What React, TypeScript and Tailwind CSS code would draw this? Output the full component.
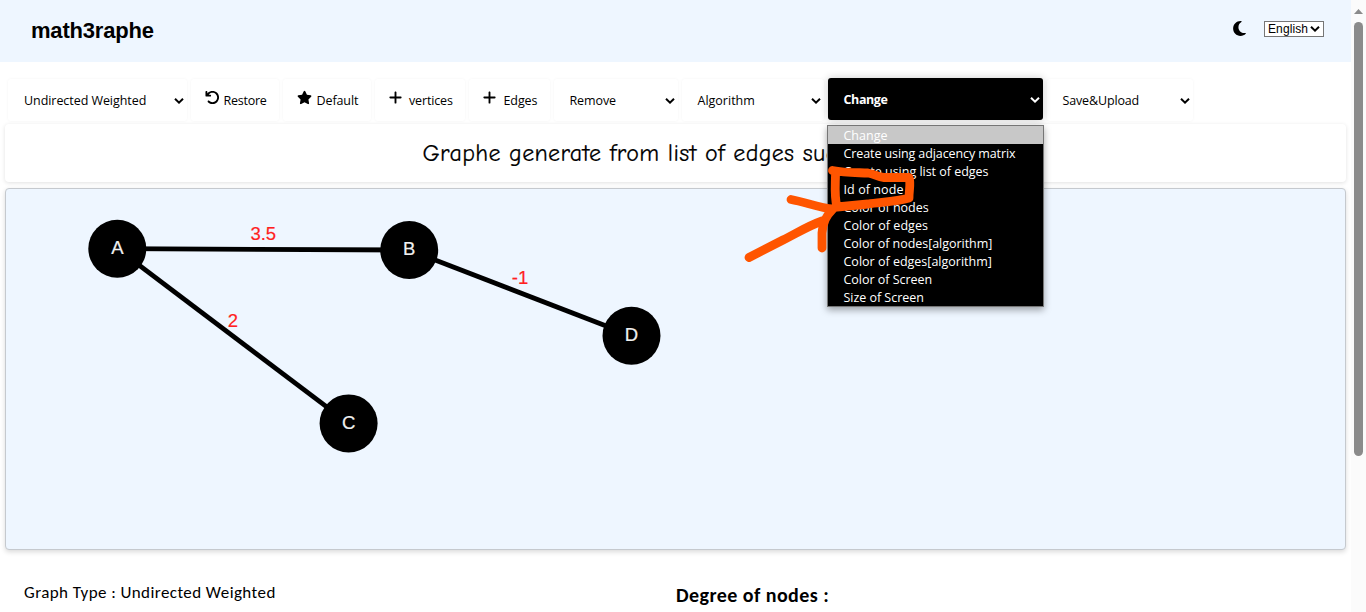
import type { ReactNode } from 'react';
import clsx from 'clsx';
import { FaArrowRotateLeft, FaMoon, FaPlus, FaStar } from 'react-icons/fa6';

const ui = 'font-["Segoe_UI","Open_Sans",sans-serif]';

function Chevron({ className }: { className?: string }) {
  return (
    <svg viewBox="0 0 10 6" className={clsx('h-[6px] w-[10px] shrink-0', className)} fill="none" stroke="currentColor" strokeWidth="2">
      <path d="M1 0.8 L5 4.6 L9 0.8" />
    </svg>
  );
}

function Card({ className, children }: { className: string; children: ReactNode }) {
  return (
    <div className={clsx('flex h-[42px] shrink-0 items-center rounded-[3px] text-[12.5px] leading-[18px] whitespace-nowrap', className)}>
      {children}
    </div>
  );
}

function Label({ children, className }: { children: ReactNode; className?: string }) {
  return <span className={clsx('pt-[2px]', className)}>{children}</span>;
}

const plain = 'bg-white text-black shadow-[0_0_3px_rgba(0,0,0,0.05)]';

const options = [
  { label: 'Change', track: 'tracking-[0px]' },
  { label: 'Create using adjacency matrix', track: 'tracking-[-0.1px]' },
  { label: 'Create using list of edges', track: 'tracking-[-0.02px]' },
  { label: 'Id of node', track: 'tracking-[0.08px]' },
  { label: 'Color of nodes', track: 'tracking-[0px]' },
  { label: 'Color of edges', track: 'tracking-[0.05px]' },
  { label: 'Color of nodes[algorithm]', track: 'tracking-[-0.04px]' },
  { label: 'Color of edges[algorithm]', track: 'tracking-[0px]' },
  { label: 'Color of Screen', track: 'tracking-[-0.03px]' },
  { label: 'Size of Screen', track: 'tracking-[-0.03px]' },
];

function ChangeMenu() {
  return (
    <div className="absolute top-[47px] -left-px z-10 w-[217px] border border-[#767676] bg-black font-normal text-white shadow-[0_3px_7px_rgba(0,0,0,0.35)]">
      {options.map((o, i) => (
        <div key={o.label} className={clsx('h-[18px] pl-[15.5px] leading-[20px]', o.track, i === 0 && 'bg-[#c8c8c8]')}>
          {o.label}
        </div>
      ))}
    </div>
  );
}

const nodes = [
  { id: 'A', x: 117.3, y: 248.7 },
  { id: 'B', x: 409.2, y: 250 },
  { id: 'C', x: 348.6, y: 423.4 },
  { id: 'D', x: 631.5, y: 335.7 },
];
const edges = [
  { a: 0, b: 1, w: '3.5', x: 263.3, y: 240.3 },
  { a: 0, b: 2, w: '2', x: 232.8, y: 327.3 },
  { a: 1, b: 3, w: '-1', x: 520, y: 284 },
];

function Graph() {
  return (
    <svg viewBox="6 189 1339 360" className="block h-full w-full">
      {edges.map((e) => (
        <line key={e.w} x1={nodes[e.a].x} y1={nodes[e.a].y} x2={nodes[e.b].x} y2={nodes[e.b].y} stroke="#000" strokeWidth="4.8" />
      ))}
      {nodes.map((n) => (
        <g key={n.id}>
          <circle cx={n.x} cy={n.y} r="29" />
          <text x={n.x} y={n.y + 5.2} fill="#f0f0f0" stroke="#f0f0f0" strokeWidth="0.2" fontSize="18.5" textAnchor="middle" fontFamily="Liberation Sans, Arial, sans-serif">{n.id}</text>
        </g>
      ))}
      {edges.map((e) => (
        <text key={e.w} x={e.x} y={e.y} fill="#ff1f1f" stroke="#ff1f1f" strokeWidth="0.2" fontSize="18.5" textAnchor="middle" fontFamily="Liberation Sans, Arial, sans-serif">{e.w}</text>
      ))}
    </svg>
  );
}

function Marker() {
  return (
    <svg viewBox="740 160 180 110" className="pointer-events-none absolute top-[160px] left-[740px] z-20 h-[110px] w-[180px]" fill="none" stroke="#ff5500" strokeWidth="8.8" strokeLinecap="round" strokeLinejoin="round">
      <path d="M832.500 170.500 C845 173 857 172.500 868 173 C875 174 877 177 884 177.500 L909 177.500 C911 183 909 190 909 198 C895 202 880 202 868 204 L837 207 C834 196 835.500 184 835.500 173" />
      <path d="M791 199.500 C805 202 820 208 833 209 C826 216 823 222 822 233 L822 248" />
      <path d="M749 257.500 L783 240 C797 233 808 226 822 221" />
    </svg>
  );
}

export default function App() {
  return (
    <div className={clsx('relative flex h-[612px] w-[1366px] overflow-hidden bg-white text-black', ui)}>
      <main className="flex w-[1351px] flex-col">
        <header className="flex h-[62px] shrink-0 items-center justify-between bg-[#eef6ff] pr-[27px] pl-[31px] font-['Liberation_Sans',Arial,sans-serif]">
          <h1 className="pb-[2px] text-[22px] font-bold tracking-[-0.2px]">math3raphe</h1>
          <div className="flex items-center">
            <FaMoon className="mr-[16px] mb-[6px] size-[17px]" />
            <div className="mb-[4px] flex h-[16px] w-[60px] items-center border border-[#767676] bg-white pl-[3px] text-[12px] leading-[14px]">
              <span className="w-[42px] tracking-[0.1px]">English</span>
              <Chevron />
            </div>
          </div>
        </header>
        <div className="flex gap-[4px] px-[8px] pt-[17px]">
          <Card className={clsx(plain, 'w-[179px] justify-between pr-[3px] pl-[16px]')}><Label className="tracking-[-0.06px]">Undirected Weighted</Label><Chevron className="mt-px" /></Card>
          <Card className={clsx(plain, 'w-[88px] pl-[14px]')}><FaArrowRotateLeft className="mr-[3px] mb-[5px] size-[15px]" /><Label className="pl-[0.5px] tracking-[-0.25px]">Restore</Label></Card>
          <Card className={clsx(plain, 'w-[88px] pl-[14px]')}><FaStar className="mr-[4.5px] mb-[5px] size-[15px]" /><Label className="tracking-[-0.1px]">Default</Label></Card>
          <Card className={clsx(plain, 'w-[90px] pl-[13px]')}><FaPlus className="mr-[5px] mb-[5px] size-[15px]" /><Label className="pl-px tracking-[-0.15px]">vertices</Label></Card>
          <Card className={clsx(plain, 'w-[81px] pl-[13px]')}><FaPlus className="mr-[5px] mb-[5px] size-[15px]" /><Label className="pl-[1.5px] tracking-[-0.1px]">Edges</Label></Card>
          <Card className={clsx(plain, 'w-[124px] justify-between pr-[3px] pl-[15.5px]')}><Label className="tracking-[-0.1px]">Remove</Label><Chevron className="mt-px" /></Card>
          <Card className={clsx(plain, 'w-[142px] justify-between pr-[3px] pl-[15.5px]')}><Label>Algorithm</Label><Chevron className="mt-px" /></Card>
          <Card className="relative -top-px w-[215px] justify-between bg-black pr-[3px] pl-[15.5px] font-bold text-white shadow-[0_0_8px_rgba(0,0,0,0.2)]"><Label className="tracking-[-0.4px]">Change</Label><Chevron className="mt-px" /><ChangeMenu /></Card>
          <Card className={clsx(plain, 'w-[146px] justify-between pr-[3px] pl-[15.5px]')}><Label className="tracking-[-0.15px]">Save&amp;Upload</Label><Chevron className="mt-px" /></Card>
        </div>
        <div className="mt-[3px] mr-[5px] ml-[5px] h-[58px] shrink-0 rounded-[4px] bg-white pl-[417.5px] text-[24px] leading-[59px] tracking-[0.33px] whitespace-nowrap shadow-[0_1px_4px_rgba(0,0,0,0.12)] [-webkit-text-stroke:0.2px_black] font-['Comic_Sans_MS','Comic_Neue',Lato,sans-serif]">
          Graphe generate from list of edges successfully
        </div>
        <section className="mx-[5px] mt-[6px] h-[362px] shrink-0 overflow-hidden rounded-[4px] border border-[#c5c9ce] bg-[#eef6ff] shadow-[0_2px_5px_rgba(0,0,0,0.15)]">
          <Graph />
        </section>
        <div className="flex font-[Calibri,Carlito,'Open_Sans',sans-serif] whitespace-nowrap">
          <p className="w-[652px] pt-[31px] pl-[24px] text-[17px] leading-[24px] tracking-[0.42px]">Graph Type : Undirected Weighted</p>
          <h2 className="pt-[32px] pl-[24px] text-[20px] leading-[26px] font-bold tracking-[0.44px]">Degree of nodes :</h2>
        </div>
      </main>
      <aside className="flex w-[15px] flex-col items-center bg-[#fbfbfb]">
        <svg viewBox="0 0 9 5" className="mt-[9px] h-[5px] w-[9px]" fill="#8b8b8b"><path d="M4.500 0 L9 5 H0 Z" /></svg>
        <div className="mt-[8px] h-[434px] w-[9px] rounded-full bg-[#8b8b8b]" />
      </aside>
      <Marker />
    </div>
  );
}
